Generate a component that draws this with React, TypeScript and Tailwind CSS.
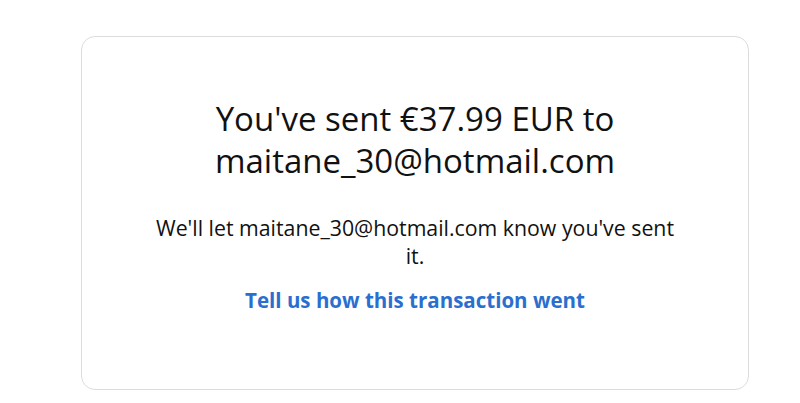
export default function App() {
  return (
    <div className="w-[800px] h-[403px] bg-white pt-[36px] pl-[81px]" style={{ fontFamily: '"Open Sans", sans-serif' }}>
      <div className="w-[668px] h-[354px] border border-[#dcdcdc] rounded-[14px] flex flex-col items-center pt-[61px]">
        <h1 className="text-[33px] leading-[42px] text-[#111] text-center w-[480px]">
          You've sent €37.99 EUR to maitane_30@hotmail.com
        </h1>
        <p className="mt-[32px] text-[21.3px] leading-[28px] text-[#111] text-center w-[530px]">
          We'll let maitane_30@hotmail.com know you've sent it.
        </p>
        <a className="mt-[16px] text-[20.5px] leading-[28px] font-bold text-[#2a6fd0]">
          Tell us how this transaction went
        </a>
      </div>
    </div>
  );
}
